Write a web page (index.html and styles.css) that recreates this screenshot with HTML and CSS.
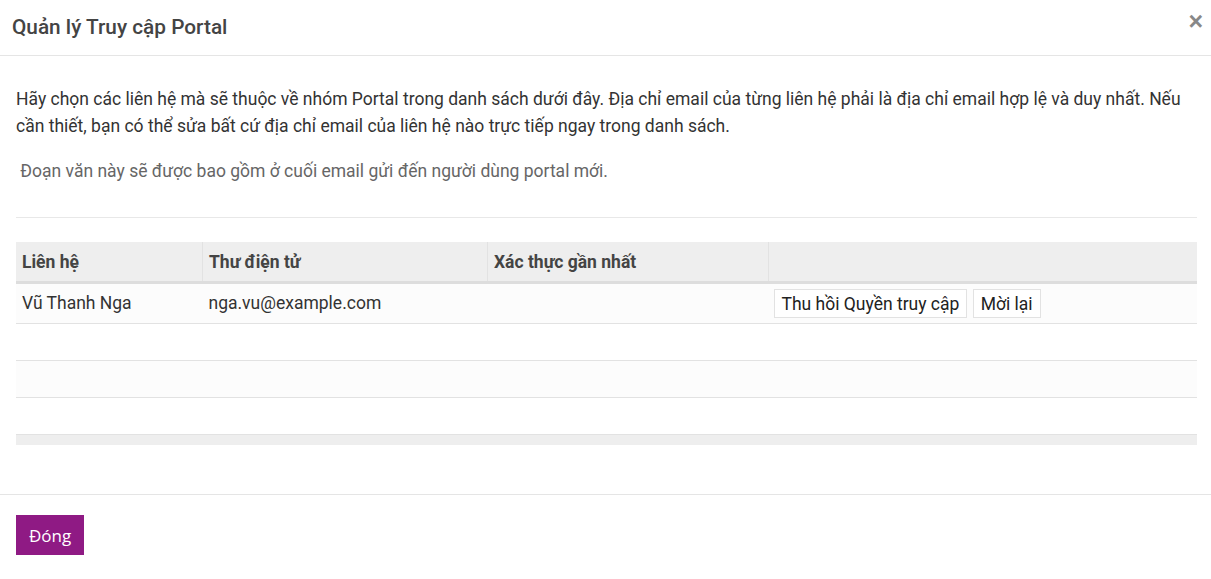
FILE: index.html
```html
<!DOCTYPE html>
<html lang="vi">
  <head>
    <meta charset="UTF-8" />
    <meta name="viewport" content="width=device-width, initial-scale=1.0" />
    <title>Quản lý Truy cập Portal</title>
    <link rel="stylesheet" href="styles.css">
  </head>
  <body>
    <div class="modal">
      <div class="header">
        <h4 class="title">Quản lý Truy cập Portal</h4>
        <button class="close">×</button>
      </div>

      <div class="content">
        <p class="intro">Hãy chọn các liên hệ mà sẽ thuộc về nhóm Portal trong danh sách dưới đây. Địa chỉ email của từng liên hệ phải là địa chỉ email hợp lệ và duy nhất. Nếu cần thiết, bạn có thể sửa bất cứ địa chỉ email của liên hệ nào trực tiếp ngay trong danh sách.</p>
        <p class="note"> Đoạn văn này sẽ được bao gồm ở cuối email gửi đến người dùng portal mới.</p>
        <hr class="sep">

        <table class="list">
          <thead>
            <tr>
              <th class="c1">Liên hệ</th>
              <th class="c2">Thư điện tử</th>
              <th class="c3">Xác thực gần nhất</th>
              <th class="c4"></th>
            </tr>
          </thead>
          <tbody>
            <tr class="first odd">
              <td>Vũ Thanh Nga</td>
              <td>nga.vu@example.com</td>
              <td></td>
              <td class="actions"><button class="btn">Thu hồi Quyền truy cập</button> <button class="btn">Mời lại</button></td>
            </tr>
            <tr class="empty"><td></td><td></td><td></td><td></td></tr>
            <tr class="empty odd"><td></td><td></td><td></td><td></td></tr>
            <tr class="empty"><td></td><td></td><td></td><td></td></tr>
          </tbody>
          <tfoot>
            <tr><td colspan="4"></td></tr>
          </tfoot>
        </table>
      </div>

      <div class="footer">
        <button class="primary">Đóng</button>
      </div>
    </div>
  </body>
</html>
```

FILE: styles.css
```css
body {
  margin: 0;
  background: #fff;
  font-family: Roboto, "Noto Sans", sans-serif;
  font-size: 17.5px;
  color: #333;
}

.header {
  display: flex;
  justify-content: space-between;
  align-items: center;
  height: 56px;
  box-sizing: border-box;
  padding: 0 8px 2px 12px;
  border-bottom: 1px solid #e5e5e5;
}
.title {
  margin: 0;
  font-size: 20.8px;
  font-weight: 500;
  color: #444;
}
.close {
  border: 0;
  background: none;
  padding: 0;
  font-family: "Liberation Sans", sans-serif;
  font-size: 25px;
  font-weight: bold;
  color: #888;
  line-height: 1;
  margin-top: -11px;
}

.content {
  padding: 30px 14px 49px 16px;
}
.intro {
  margin: 0;
  line-height: 27px;
}
.note {
  margin: 18px 0 0;
  line-height: 27px;
  color: #666;
  white-space: pre;
}
.sep {
  margin: 32px 0 24px;
  border: 0;
  border-top: 1px solid #e8e8e8;
}

.list {
  width: 100%;
  border-collapse: collapse;
}
.list th {
  background: #eee;
  text-align: left;
  font-weight: bold;
  height: 39px;
  padding: 0 6px;
  border-left: 1px solid #e2e2e2;
  border-bottom: 3px solid #ddd;
  color: #444;
}
.list th:first-child {
  border-left: 0;
}
.c1 { width: 174px; }
.c2 { width: 272px; }
.c3 { width: 268px; }
.list td {
  height: 36px;
  padding: 0 6px;
  border-bottom: 1px solid #e2e2e2;
}
.list .first td {
  height: 35px;
  padding-bottom: 2px;
}
.odd {
  background: #fcfcfc;
}
.list .actions {
  padding: 2px 0 0 5px;
}
.btn {
  font-family: Roboto, sans-serif;
  font-size: 17.5px;
  color: #222;
  background: #fff;
  border: 1px solid #e2e2e2;
  height: 29px;
  padding: 0 7px;
  margin: 0;
  vertical-align: middle;
}
.btn + .btn {
  margin-left: 1px;
}
.list tfoot td {
  height: 10px;
  padding: 0;
  background: #eee;
  border: 0;
}

.footer {
  border-top: 1px solid #e5e5e5;
  padding: 20px 16px;
}
.primary {
  background: #8f1a84;
  color: #fff;
  border: 0;
  height: 40px;
  width: 68px;
  font-family: "Open Sans", sans-serif;
  font-size: 17px;
}
```
